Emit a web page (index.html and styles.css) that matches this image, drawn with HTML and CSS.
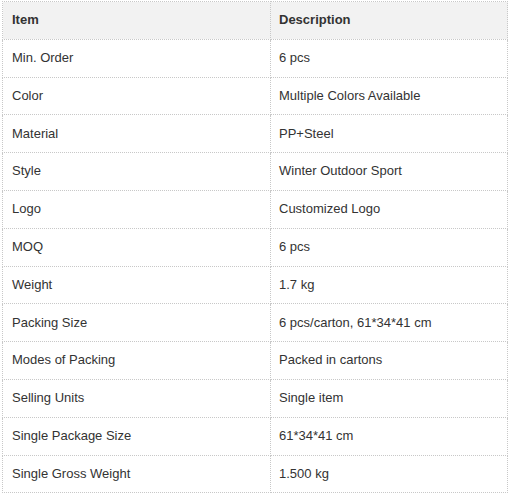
FILE: index.html
```html
<!DOCTYPE html>
<html>
<head>
<meta charset="utf-8">
<link rel="stylesheet" href="styles.css">
</head>
<body>
<div class="wrap">
<table class="spec">
<thead>
<tr><th class="c1">Item</th><th>Description</th></tr>
</thead>
<tbody>
<tr><td>Min. Order</td><td>6 pcs</td></tr>
<tr><td>Color</td><td>Multiple Colors Available</td></tr>
<tr><td>Material</td><td>PP+Steel</td></tr>
<tr><td>Style</td><td>Winter Outdoor Sport</td></tr>
<tr><td>Logo</td><td>Customized Logo</td></tr>
<tr><td>MOQ</td><td>6 pcs</td></tr>
<tr><td>Weight</td><td>1.7 kg</td></tr>
<tr><td>Packing Size</td><td>6 pcs/carton, 61*34*41 cm</td></tr>
<tr><td>Modes of Packing</td><td>Packed in cartons</td></tr>
<tr><td>Selling Units</td><td>Single item</td></tr>
<tr><td>Single Package Size</td><td>61*34*41 cm</td></tr>
<tr><td>Single Gross Weight</td><td>1.500 kg</td></tr>
</tbody>
</table>
</div>
</body>
</html>
```
FILE: styles.css
```css
html, body {
  margin: 0;
  padding: 0;
  background: #fff;
}
.wrap {
  padding: 1px 0 0 2px;
}
.spec {
  border-collapse: collapse;
  width: 506px;
  table-layout: fixed;
  font-family: "Liberation Sans", Arial, sans-serif;
  font-size: 13px;
  color: #333;
}
.spec th, .spec td {
  border: 1px dotted #c8c8c8;
  padding: 10.3px 8px 11.5px 8px;
  line-height: 15px;
  text-align: left;
  vertical-align: middle;
}
.spec th:first-child, .spec td:first-child {
  padding-left: 9px;
}
.spec th {
  background: #f2f2f2;
  font-weight: bold;
}
.spec .c1 {
  width: 250px;
}
```
